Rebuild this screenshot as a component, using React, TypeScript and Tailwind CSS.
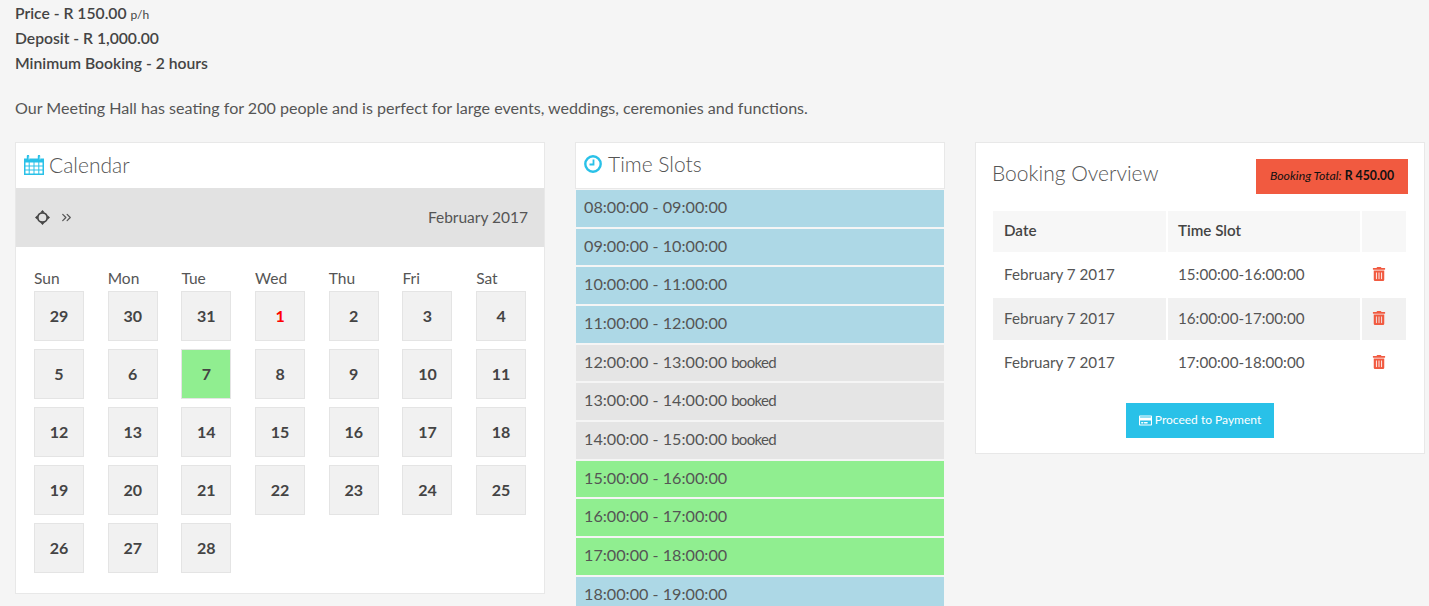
import { ChevronsRight } from "lucide-react";
import { FaRegCreditCard, FaTrashAlt } from "react-icons/fa";

const weekdays = ["Sun", "Mon", "Tue", "Wed", "Thu", "Fri", "Sat"];
const days = [29, 30, 31, 1, 2, 3, 4, 5, 6, 7, 8, 9, 10, 11, 12, 13, 14, 15, 16, 17, 18, 19, 20, 21, 22, 23, 24, 25, 26, 27, 28];

const slots = [
  { label: "08:00:00 - 09:00:00", color: "bg-[#add8e6]" },
  { label: "09:00:00 - 10:00:00", color: "bg-[#add8e6]" },
  { label: "10:00:00 - 11:00:00", color: "bg-[#add8e6]" },
  { label: "11:00:00 - 12:00:00", color: "bg-[#add8e6]" },
  { label: "12:00:00 - 13:00:00", booked: true, color: "bg-[#e5e5e5]" },
  { label: "13:00:00 - 14:00:00", booked: true, color: "bg-[#e5e5e5]" },
  { label: "14:00:00 - 15:00:00", booked: true, color: "bg-[#e5e5e5]" },
  { label: "15:00:00 - 16:00:00", color: "bg-[#90ee90]" },
  { label: "16:00:00 - 17:00:00", color: "bg-[#90ee90]" },
  { label: "17:00:00 - 18:00:00", color: "bg-[#90ee90]" },
  { label: "18:00:00 - 19:00:00", color: "bg-[#add8e6]" },
];

const bookings = [
  { date: "February 7 2017", time: "15:00:00-16:00:00", shade: "bg-white" },
  { date: "February 7 2017", time: "16:00:00-17:00:00", shade: "bg-[#f1f1f1]" },
  { date: "February 7 2017", time: "17:00:00-18:00:00", shade: "bg-white" },
];

function CalendarIcon() {
  return (
    <svg viewBox="0 0 20 20" className="h-[20px] w-[20px]">
      <path d="M0 3.5h20V20H0z" fill="#29c1e8" />
      <path d="M4 1v4M15 1v4" stroke="#29c1e8" strokeWidth="2.4" strokeLinecap="round" />
      <path d="M5 1.5v3M16 1.5v3" stroke="#fff" strokeWidth="0.6" />
      <path
        d="M1.5 7.5h3.2v3h-3.2zM5.7 7.5h3.8v3H5.7zM10.5 7.5h3.8v3h-3.8zM15.300 7.500h3.200v3h-3.200zM1.500 11.500h3.200v3h-3.200zM5.700 11.500h3.800v3H5.700zM10.500 11.500h3.800v3h-3.800zM15.300 11.500h3.200v3h-3.200zM1.500 15.500h3.200v3h-3.200zM5.700 15.500h3.800v3H5.700zM10.500 15.500h3.800v3h-3.800zM15.300 15.500h3.200v3h-3.200z"
        fill="#fff"
      />
    </svg>
  );
}

function ClockIcon() {
  return (
    <svg viewBox="0 0 18 18" className="h-[18px] w-[18px]" fill="none" stroke="#29c1e8">
      <circle cx="9" cy="9" r="7.7" strokeWidth="2.4" />
      <path d="M9.500 4.500v5H5.500" strokeWidth="1.800" />
    </svg>
  );
}

function MoveIcon() {
  return (
    <svg viewBox="0 0 16 16" className="h-[15px] w-[15px]" fill="none">
      <circle cx="8" cy="8" r="5" stroke="#444" strokeWidth="1.800" />
      <path d="M8 0l2.400 2.600H5.600zM8 16l2.400-2.600H5.600zM0 8l2.600-2.400v4.800zM16 8l-2.600-2.400v4.800z" fill="#444" />
    </svg>
  );
}

function DayCell({ day, index }: { day: number; index: number }) {
  const selected = index === 9;
  const today = index === 3;
  return (
    <div
      className={`flex h-[50px] w-[50px] items-center justify-center border border-[#e4e4e4] pb-px text-[16px] font-bold ${
        selected ? "bg-[#90ee90]" : "bg-[#f1f1f1]"
      } ${today ? "text-[#f00]" : "text-[#444]"}`}
    >
      {day}
    </div>
  );
}

export default function App() {
  return (
    <div className="h-[606px] overflow-hidden bg-[#f5f5f5] pl-[15px] pr-[4px] pt-px font-['Lato','Open_Sans',sans-serif] text-[#555]">
      <div className="text-[15.700px] font-semibold leading-[25px] text-[#444]">
        <p>
          Price - R 150.00 <span className="text-[12px] font-normal leading-none">p/h</span>
        </p>
        <p>Deposit - R 1,000.00</p>
        <p>Minimum Booking - 2 hours</p>
      </div>
      <p className="mt-[19px] text-[16.080px] leading-[25px]">
        Our Meeting Hall has seating for 200 people and is perfect for large events, weddings, ceremonies and functions.
      </p>

      <div className="mt-[22px] flex items-start gap-[30px]">
        <section className="w-[530px] border border-[#e8e8e8] bg-white">
          <h2 className="flex h-[45px] items-center gap-[5px] pb-[2px] pl-[8px] text-[21px] font-light text-[#555]">
            <CalendarIcon />
            Calendar
          </h2>
          <div className="flex h-[59px] items-center bg-[#e2e2e2] pl-[19px] pr-[16px] text-[#555]">
            <MoveIcon />
            <ChevronsRight size={15} className="ml-[9px]" />
            <span className="ml-auto text-[15.500px]">February 2017</span>
          </div>
          <div className="pb-[20px] pl-[18px] pt-[23px]">
            <div className="grid grid-cols-[repeat(7,73.700px)]">
              {weekdays.map((name) => (
                <span key={name} className="h-[21px] text-[15.500px] leading-[16px]">
                  {name}
                </span>
              ))}
            </div>
            <div className="grid grid-cols-[repeat(7,73.700px)] gap-y-[8px]">
              {days.map((day, index) => (
                <DayCell key={index} day={day} index={index} />
              ))}
            </div>
          </div>
        </section>

        <section className="w-[370px]">
          <h2 className="flex h-[47px] items-center gap-[6px] border border-[#e8e8e8] bg-white pb-[3px] pl-[8px] text-[21px] font-light text-[#555]">
            <ClockIcon />
            Time Slots
          </h2>
          <div className="mx-px mt-px flex flex-col gap-[2px]">
            {slots.map((slot) => (
              <div
                key={slot.label}
                className={`flex h-[36.670px] shrink-0 items-center gap-[4px] pb-[2px] pl-[8px] text-[16.200px] text-[#555] ${slot.color}`}
              >
                {slot.label}
                {slot.booked && <span className="text-[15px] tracking-[-0.7px]">booked</span>}
              </div>
            ))}
          </div>
        </section>

        <section className="w-[450px] border border-[#e8e8e8] bg-white pb-[15px] pl-[16px] pr-[16px] pt-[16px]">
          <div className="flex items-start justify-between">
            <h2 className="-mt-[2px] text-[21px] font-light text-[#555]">Booking Overview</h2>
            <div className="flex h-[35px] w-[152px] items-center justify-center bg-[#f15a40] text-[12.300px] text-[#111]">
              <em>Booking Total:</em>
              <b className="ml-[3px]">R 450.00</b>
            </div>
          </div>
          <table className="-ml-px mt-[15px] w-[417px] border-separate border-spacing-[2px] text-[15.200px]">
            <thead>
              <tr className="h-[41px] text-left">
                <th className="w-[173px] bg-[#f7f7f7] pb-[2px] pl-[11px] font-semibold text-[#444]">Date</th>
                <th className="w-[192px] bg-[#f7f7f7] pb-[2px] pl-[10px] font-semibold text-[#444]">Time Slot</th>
                <th className="bg-[#f7f7f7]" />
              </tr>
            </thead>
            <tbody>
              {bookings.map((row) => (
                <tr key={row.time} className="h-[42px]">
                  <td className={`pb-[2px] pl-[11px] ${row.shade}`}>{row.date}</td>
                  <td className={`pb-[2px] pl-[10px] ${row.shade}`}>{row.time}</td>
                  <td className={`pb-[2px] ${row.shade}`}>
                    <FaTrashAlt size={14} className="ml-[10px] text-[#f15a40]" />
                  </td>
                </tr>
              ))}
            </tbody>
          </table>
          <button className="mx-auto mt-[17px] flex h-[35px] w-[148px] items-center justify-center gap-[3px] bg-[#29c1e8] pb-px text-[12px] text-white">
            <FaRegCreditCard size={13} />
            Proceed to Payment
          </button>
        </section>
      </div>
    </div>
  );
}
